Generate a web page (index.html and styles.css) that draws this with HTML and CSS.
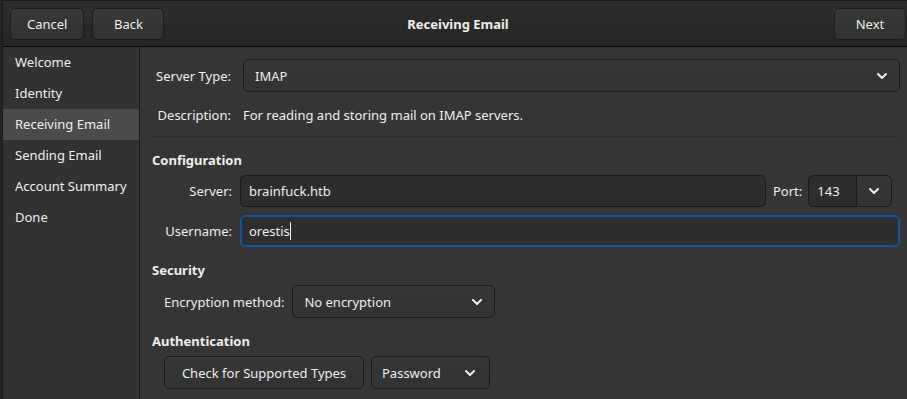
FILE: index.html
```html
<!DOCTYPE html>
<html lang="en">
<head>
  <meta charset="UTF-8">
  <title>Receiving Email</title>
  <link rel="stylesheet" href="styles.css">
</head>
<body>
  <div class="window">

    <!-- HEADER BAR -->
    <header class="headerbar">
      <div class="hb-left">
        <button class="btn">Cancel</button>
        <button class="btn">Back</button>
      </div>
      <div class="title">Receiving Email</div>
      <div class="hb-right">
        <button class="btn">Next</button>
      </div>
    </header>

    <div class="main">
      <!-- SIDEBAR -->
      <nav class="sidebar">
        <div class="side-item">Welcome</div>
        <div class="side-item">Identity</div>
        <div class="side-item active">Receiving Email</div>
        <div class="side-item">Sending Email</div>
        <div class="side-item">Account Summary</div>
        <div class="side-item">Done</div>
      </nav>

      <!-- PAGE -->
      <section class="page">
        <div class="row row-type">
          <span class="label label-top">Server Type:</span>
          <div class="combo combo-wide">
            <span>IMAP</span>
            <svg class="chev" width="10" height="6" viewBox="0 0 10 6"><path d="M1 1l4 4 4-4" fill="none" stroke="currentColor" stroke-width="2" stroke-linecap="round" stroke-linejoin="round"/></svg>
          </div>
        </div>
        <div class="row row-desc">
          <span class="label label-top">Description:</span>
          <span>For reading and storing mail on IMAP servers.</span>
        </div>
        <div class="separator"></div>

        <h3 class="heading">Configuration</h3>
        <div class="row row-field">
          <span class="label label-conf">Server:</span>
          <div class="entry entry-server">brainfuck.htb</div>
          <span class="port-label">Port:</span>
          <div class="port-combo">
            <span class="port-value">143</span>
            <span class="port-btn">
              <svg class="chev" width="10" height="6" viewBox="0 0 10 6"><path d="M1 1l4 4 4-4" fill="none" stroke="currentColor" stroke-width="2" stroke-linecap="round" stroke-linejoin="round"/></svg>
            </span>
          </div>
        </div>
        <div class="row row-field">
          <span class="label label-conf">Username:</span>
          <div class="entry entry-user focused"><span class="caret">orestis</span></div>
        </div>

        <h3 class="heading">Security</h3>
        <div class="row row-field">
          <span class="label label-sec">Encryption method:</span>
          <div class="combo combo-enc">
            <span>No encryption</span>
            <svg class="chev" width="10" height="6" viewBox="0 0 10 6"><path d="M1 1l4 4 4-4" fill="none" stroke="currentColor" stroke-width="2" stroke-linecap="round" stroke-linejoin="round"/></svg>
          </div>
        </div>

        <h3 class="heading">Authentication</h3>
        <div class="row row-field auth">
          <button class="btn btn-check">Check for Supported Types</button>
          <div class="combo combo-pass">
            <span>Password</span>
            <svg class="chev" width="10" height="6" viewBox="0 0 10 6"><path d="M1 1l4 4 4-4" fill="none" stroke="currentColor" stroke-width="2" stroke-linecap="round" stroke-linejoin="round"/></svg>
          </div>
        </div>
      </section>
    </div>

  </div>
</body>
</html>
```

FILE: styles.css
```css
body {
  margin: 0;
  padding: 0 0 0 2px;
  background: #242424;
  font-family: "Noto Sans", "DejaVu Sans", sans-serif;
  font-size: 13px;
  color: #eeeeec;
  width: 907px;
  height: 399px;
  overflow: hidden;
}

.window {
  border-left: 1px solid #1b1b1b;
  border-top: 1px solid #1b1b1b;
  height: 398px;
  background: #353535;
  display: flex;
  flex-direction: column;
}

/* header bar */
.headerbar {
  height: 46px;
  box-sizing: border-box;
  display: grid;
  grid-template-columns: 1fr auto 1fr;
  align-items: center;
  padding: 0 3px 0 7px;
  background: linear-gradient(#2d2d2d, #272727);
  border-bottom: 1px solid #070707;
}

.hb-left {
  display: flex;
  gap: 8px;
}

.hb-right {
  display: flex;
  justify-content: flex-end;
}

.title {
  font-weight: bold;
  font-size: 13px;
}

.btn {
  font-family: inherit;
  font-size: 13px;
  color: #eeeeec;
  height: 32px;
  min-width: 72px;
  padding: 0 16px;
  border: 1px solid #1b1b1b;
  border-radius: 5px;
  background: linear-gradient(#373737, #323232);
  box-shadow: inset 0 1px rgba(255,255,255,0.02);
}

/* main */
.main {
  flex: 1;
  display: flex;
}

.sidebar {
  width: 136px;
  background: #323232;
  border-right: 1px solid #1b1b1b;
}

.side-item {
  height: 31px;
  line-height: 31px;
  padding-left: 12px;
}

.side-item.active {
  background: #4a4a4a;
}

.page {
  flex: 1;
  padding: 12px 9px 0 12px;
}

.row {
  display: flex;
  align-items: center;
}

.row-type {
  height: 33px;
  gap: 12px;
}

.row-desc {
  height: 31px;
  margin-top: 7px;
  gap: 12px;
}

.label {
  text-align: right;
  flex: none;
}

.label-top {
  width: 79px;
}

.separator {
  height: 1px;
  background: #2d2d2d;
  margin-top: 6px;
}

.heading {
  margin: 14px 0 6px;
  font-size: 13px;
  font-weight: bold;
  line-height: 18px;
}

.row-field {
  gap: 8px;
  margin-bottom: 8px;
  padding-left: 12px;
}

.label-conf {
  width: 68px;
}

.combo {
  box-sizing: border-box;
  height: 33px;
  display: flex;
  align-items: center;
  justify-content: space-between;
  padding: 0 12px 0 11px;
  border: 1px solid #1b1b1b;
  border-radius: 5px;
  background: linear-gradient(#363636, #323232);
}

.combo-wide {
  flex: 1;
}

.combo-enc {
  width: 203px;
}

.combo-pass {
  width: 119px;
  padding-left: 10px;
  padding-right: 14px;
}

.chev {
  color: #eeeeec;
  display: block;
}

.entry {
  box-sizing: border-box;
  height: 32px;
  line-height: 30px;
  padding: 0 8px;
  border: 1px solid #1b1b1b;
  border-radius: 5px;
  background: #2d2d2d;
}

.entry-server {
  width: 526px;
}

.entry-user {
  flex: 1;
}

.entry.focused {
  border-color: #15539e;
  box-shadow: inset 0 0 0 1px #15539e;
}

.caret {
  border-right: 1px solid #eeeeec;
}

.port-label {
  margin-left: -1px;
}

.port-combo {
  box-sizing: border-box;
  width: 84px;
  height: 32px;
  display: flex;
  border: 1px solid #1b1b1b;
  border-radius: 5px;
  background: #2d2d2d;
  margin-left: -2px;
}

.port-value {
  width: 48px;
  line-height: 30px;
  padding-left: 8px;
  box-sizing: border-box;
  border-right: 1px solid #1b1b1b;
}

.port-btn {
  flex: 1;
  display: flex;
  align-items: center;
  justify-content: center;
  background: linear-gradient(#363636, #323232);
  border-radius: 0 5px 5px 0;
}

.auth {
  gap: 7px;
}

.btn-check {
  height: 33px;
  width: 200px;
  padding: 0;
}
```
